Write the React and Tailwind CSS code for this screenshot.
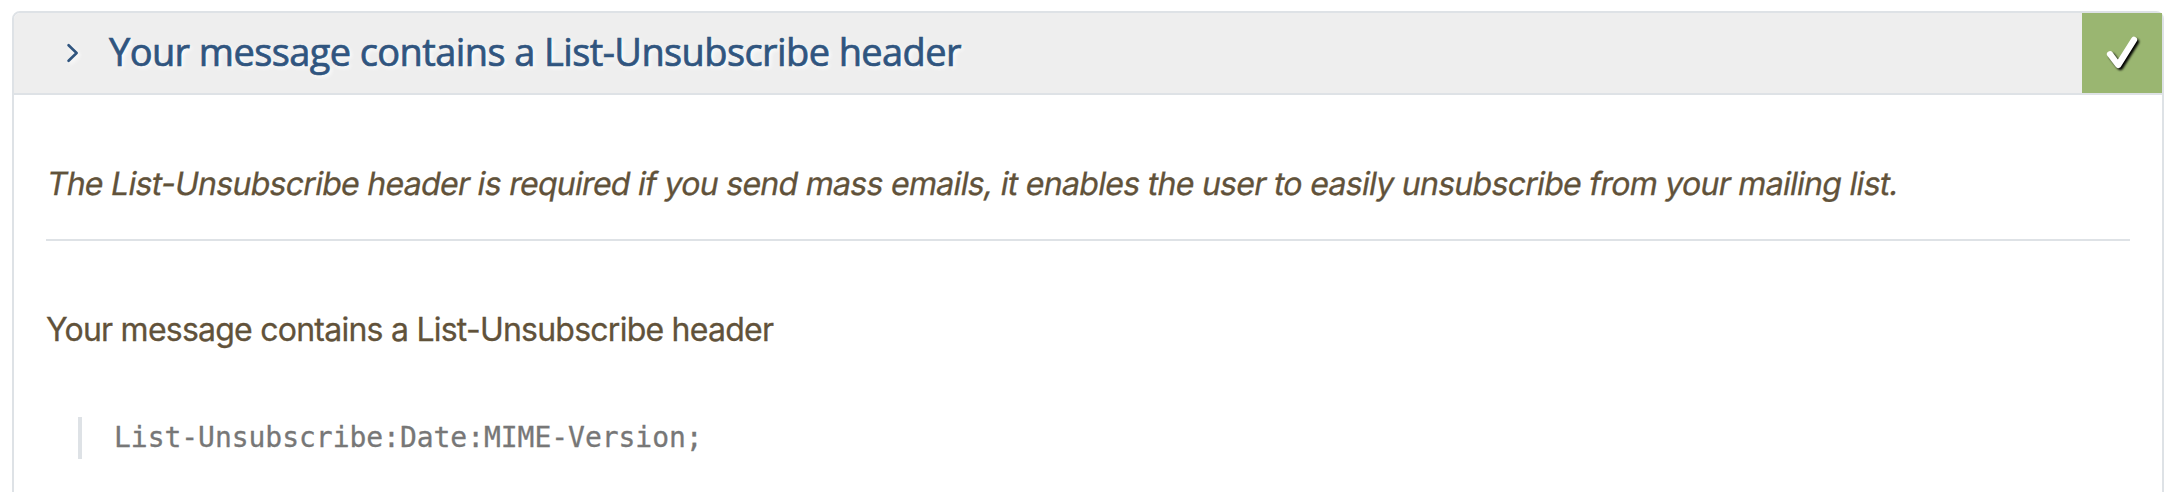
export default function App() {
  return (
    <div className="h-[492px] w-[2180px] overflow-hidden bg-white px-3 pt-[11px]">
      <section className="h-[520px] w-[2152px] rounded-t-lg border-2 border-[#dee2e6]">
        <header className="flex h-[82px] items-center overflow-hidden rounded-tl-md border-b-2 border-[#dee2e6] bg-[#eeeeee]">
          <svg className="ml-[52px] h-5 w-3 shrink-0 drop-shadow-[2px_2px_2px_white]" viewBox="0 0 12 20" fill="none" stroke="#30557f" strokeWidth="2.6" strokeLinecap="round" strokeLinejoin="round">
            <path d="M2.600 2.200 10.600 10l-8 7.800" />
          </svg>
          <h1 className="ml-[31px] pb-[3px] whitespace-nowrap font-['Open_Sans',sans-serif] text-[38px] leading-[77px] tracking-[-0.6px] text-[#30557f] [-webkit-text-stroke:0.7px_#30557f] [text-shadow:2px_2px_4px_white]">
            Your message contains a List-Unsubscribe header
          </h1>
          <div className="ml-auto h-20 w-20 shrink-0 bg-[#9ab671]">
            <svg className="h-20 w-20 drop-shadow-[2px_2px_1px_black]" viewBox="0 0 80 80" fill="none" stroke="white" strokeWidth="6.200" strokeLinecap="round" strokeLinejoin="round" role="img" aria-label="Passed">
              <path d="M28 41.200 36.200 52 52 26.800" />
            </svg>
          </div>
        </header>
        <div className="px-8 font-['Inter',sans-serif] text-[32px] leading-[48px] text-[#61523a]">
          <p className="mt-[65px] whitespace-nowrap tracking-[-0.7px] [-webkit-text-stroke:0.3px_#61523a]">
            <span className="-ml-px inline-block origin-[50%_75%] -skew-x-[10deg]">
              The List-Unsubscribe header is required if you send mass emails, it enables the user to easily unsubscribe from your mailing list.
            </span>
          </p>
          <hr className="mt-[31px] border-t-2 border-[#dee2e6]" />
          <p className="mt-[65px] tracking-[-0.76px] [-webkit-text-stroke:0.3px_#61523a]">Your message contains a List-Unsubscribe header</p>
          <blockquote className="mt-[63px] ml-8 h-[42px] border-l-4 border-[#dee2e6] pl-8 font-['DejaVu_Sans_Mono',monospace] text-[28px] leading-[41px] tracking-[-0.04px] text-[#777777] [-webkit-text-stroke:0.3px_#777777]">
            List-Unsubscribe:Date:MIME-Version;
          </blockquote>
        </div>
      </section>
    </div>
  );
}
